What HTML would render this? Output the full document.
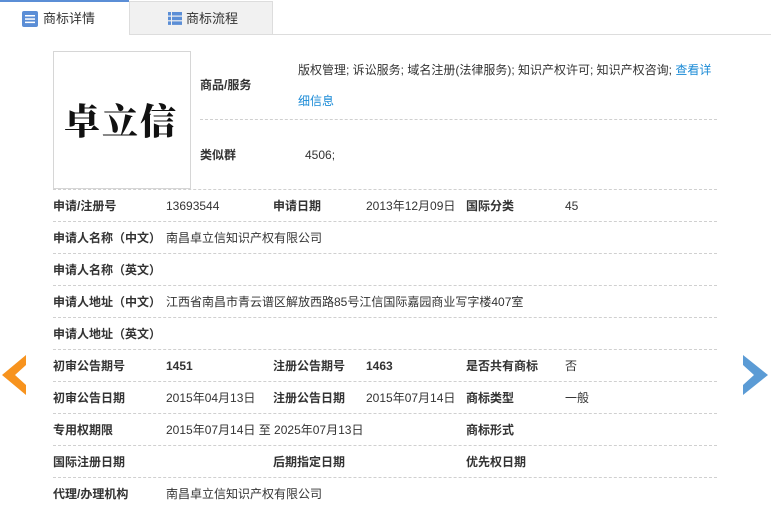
<!DOCTYPE html>
<html><head><meta charset="utf-8"><style>
*{margin:0;padding:0;box-sizing:border-box}
body{width:771px;height:509px;background:#fff;position:relative;overflow:hidden;font-family:"Liberation Sans","Noto Sans CJK SC",sans-serif;font-size:12px;color:#333}
.a{position:absolute;white-space:nowrap;line-height:16px}
.b{font-weight:bold;color:#333}
.l{position:absolute;left:53px;width:664px;border-top:1px dashed #d0d0d0;height:0}
.tabbar{position:absolute;left:0;top:34px;width:771px;border-top:1px solid #ddd}
</style></head><body>
<div class="a" style="left:0;top:0;width:129px;height:35px;border-top:2px solid #5b8ed6;background:#fff;z-index:2"></div>
<div class="a" style="left:129px;top:1px;width:144px;height:33px;background:#f1f1f1;border:1px solid #ddd;border-bottom:none"></div>
<div class="tabbar"></div>
<svg class="a" style="left:22px;top:11px;z-index:3" width="16" height="16"><rect width="16" height="16" rx="2" fill="#5b8ed6"/><rect x="3" y="4" width="10" height="1.5" fill="#fff"/><rect x="3" y="7.3" width="10" height="1.5" fill="#fff"/><rect x="3" y="10.6" width="10" height="1.5" fill="#fff"/></svg>
<div class="a" style="left:43px;top:11px;font-size:13px;color:#333;z-index:3">商标详情</div>
<svg class="a" style="left:168px;top:12px" width="14" height="13"><g fill="#5b8ed6"><rect x="0" y="0" width="3" height="3.5"/><rect x="4" y="0" width="10" height="3.5"/><rect x="0" y="4.7" width="3" height="3.5"/><rect x="4" y="4.7" width="10" height="3.5"/><rect x="0" y="9.4" width="3" height="3.5"/><rect x="4" y="9.4" width="10" height="3.5"/></g></svg>
<div class="a" style="left:186px;top:11px;font-size:13px;color:#333">商标流程</div>

<div class="a" style="left:53px;top:51px;width:138px;height:138px;border:1px solid #d6d6d6;background:#fff"></div>
<div class="a" style="left:64px;top:100px;line-height:40px;font-family:'Noto Serif CJK SC',serif;font-size:36px;font-weight:900;color:#111;letter-spacing:2px">卓立信</div>

<div class="a b" style="left:200px;top:77px">商品/服务</div>
<div class="a" style="left:298px;top:62px">版权管理; 诉讼服务; 域名注册(法律服务); 知识产权许可; 知识产权咨询; <span style="color:#1a8ad6">查看详</span></div>
<div class="a" style="left:298px;top:93px;color:#1a8ad6">细信息</div>
<div style="position:absolute;left:200px;top:119px;width:517px;border-top:1px dashed #d0d0d0"></div>
<div class="a b" style="left:200px;top:147px">类似群</div>
<div class="a" style="left:305px;top:147px">4506;</div>

<div class="l" style="top:189px"></div>
<div class="l" style="top:221px"></div>
<div class="l" style="top:253px"></div>
<div class="l" style="top:285px"></div>
<div class="l" style="top:317px"></div>
<div class="l" style="top:349px"></div>
<div class="l" style="top:381px"></div>
<div class="l" style="top:413px"></div>
<div class="l" style="top:445px"></div>
<div class="l" style="top:477px"></div>

<div class="a b" style="left:53px;top:198px">申请/注册号</div><div class="a" style="left:166px;top:198px">13693544</div>
<div class="a b" style="left:273px;top:198px">申请日期</div><div class="a" style="left:366px;top:198px">2013年12月09日</div>
<div class="a b" style="left:466px;top:198px">国际分类</div><div class="a" style="left:565px;top:198px">45</div>

<div class="a b" style="left:53px;top:230px">申请人名称（中文）</div><div class="a" style="left:166px;top:230px">南昌卓立信知识产权有限公司</div>
<div class="a b" style="left:53px;top:262px">申请人名称（英文）</div>
<div class="a b" style="left:53px;top:294px">申请人地址（中文）</div><div class="a" style="left:166px;top:294px">江西省南昌市青云谱区解放西路85号江信国际嘉园商业写字楼407室</div>
<div class="a b" style="left:53px;top:326px">申请人地址（英文）</div>

<div class="a b" style="left:53px;top:358px">初审公告期号</div><div class="a b" style="left:166px;top:358px">1451</div>
<div class="a b" style="left:273px;top:358px">注册公告期号</div><div class="a b" style="left:366px;top:358px">1463</div>
<div class="a b" style="left:466px;top:358px">是否共有商标</div><div class="a" style="left:565px;top:358px">否</div>

<div class="a b" style="left:53px;top:390px">初审公告日期</div><div class="a" style="left:166px;top:390px">2015年04月13日</div>
<div class="a b" style="left:273px;top:390px">注册公告日期</div><div class="a" style="left:366px;top:390px">2015年07月14日</div>
<div class="a b" style="left:466px;top:390px">商标类型</div><div class="a" style="left:565px;top:390px">一般</div>

<div class="a b" style="left:53px;top:422px">专用权期限</div><div class="a" style="left:166px;top:422px">2015年07月14日 至 2025年07月13日</div>
<div class="a b" style="left:466px;top:422px">商标形式</div>

<div class="a b" style="left:53px;top:454px">国际注册日期</div>
<div class="a b" style="left:273px;top:454px">后期指定日期</div>
<div class="a b" style="left:466px;top:454px">优先权日期</div>

<div class="a b" style="left:53px;top:486px">代理/办理机构</div><div class="a" style="left:166px;top:486px">南昌卓立信知识产权有限公司</div>

<svg class="a" style="left:2px;top:355px" width="25" height="40"><polygon points="24,0 0,20 24,40 24,30 13,20 24,10" fill="#f7931e"/></svg>
<svg class="a" style="left:743px;top:355px" width="25" height="40"><polygon points="0,0 25,20 0,40 0,30 11,20 0,10" fill="#5b9bd5"/></svg>
</body></html>
